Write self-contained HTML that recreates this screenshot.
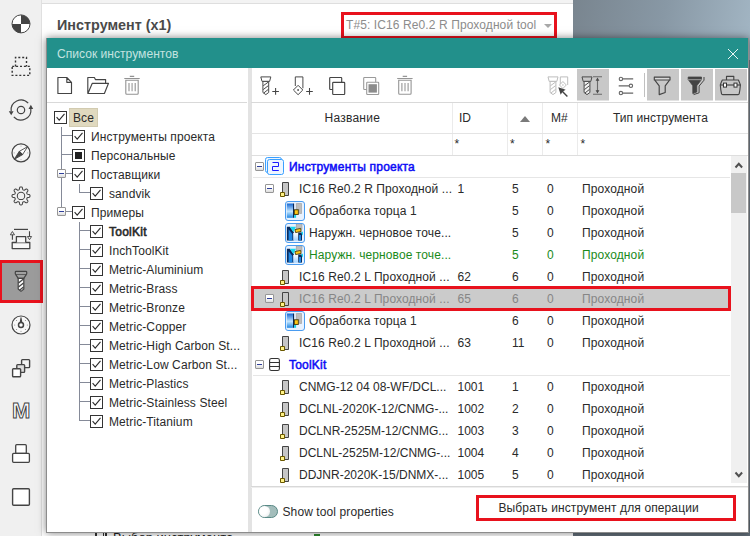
<!DOCTYPE html>
<html lang="ru">
<head>
<meta charset="utf-8">
<title>Список инструментов</title>
<style>
*{box-sizing:border-box;margin:0;padding:0}
html,body{width:750px;height:536px;overflow:hidden}
body{position:relative;font-family:"Liberation Sans",sans-serif;font-size:12px;color:#333;background:#77828e}
#bg{left:573px;top:0;width:177px;height:60px;background:linear-gradient(100deg,#79858f 0%,#8898a5 50%,#a3b6c4 100%)}
#bg2{left:573px;top:520px;width:177px;height:16px;background:#626e79}
.abs{position:absolute}
svg{position:absolute;overflow:visible}
#side{left:0;top:0;width:42px;height:536px;background:#f0f0f0;border-right:1px solid #e0e0e0}
#selbox{left:-1px;top:260px;width:44px;height:43px;background:#9b9b9b;border:3px solid #e8121d}
#panel{left:42px;top:0;width:531px;height:536px;background:#fff}
#panel .topline{left:0;top:0;width:531px;height:4px;background:#f3f3f3;border-bottom:1px solid #dedede}
#ptitle{left:15px;top:16px;font-size:15px;font-weight:bold;color:#4a4a4a;white-space:nowrap;transform-origin:0 0;transform:scaleX(.958)}
#combo{left:299px;top:12px;width:216px;height:27px;border:3px solid #e8121d;font-size:12px;letter-spacing:.1px;color:#8c8c8c;line-height:21px;padding-left:2px;white-space:nowrap}
#combo span{display:inline-block}
#combo i{position:absolute;right:2px;top:9px;border:4px solid transparent;border-top:4px solid #a8a8a8;border-bottom:0}
#dlg{left:46px;top:38px;width:703px;height:495px;background:#fff;border:1px solid #8c8c8c;border-top:0;box-shadow:0 0 8px rgba(0,0,0,.5)}
#dtitle{left:0;top:0;width:701px;height:30px;background:#22908b;color:#c4e3e0;font-size:13px;line-height:32px;padding-left:10px}
#dtitle span{display:inline-block;transform-origin:0 50%;transform:scaleX(.93)}
#lp{left:0;top:30px;width:200px;height:464px;background:#fff}
#split{left:201px;top:30px;width:3px;height:464px;background:#e3e3e3}
#rp{left:204px;top:30px;width:497px;height:464px;background:#fff}
.tbline{left:0;top:34px;height:1px;background:#d9d9d9}
.hl{position:absolute;height:1px;background:#ebebeb}
.vl{position:absolute;width:1px;background:#ebebeb}
.row{position:absolute;left:0;width:480px;height:22px;line-height:22px;white-space:nowrap;color:#2a2a2a}
.row span{position:absolute;top:0}
.row.g{color:#0c0cf6;-webkit-text-stroke:.5px #0c0cf6;letter-spacing:.2px}
.row.gr{color:#1a8a1a}
.row.sel{color:#868686}
.selbx{position:absolute;left:0;width:480px;height:25px;border:3px solid #e8121d;background:#cbcbcb}
.tree div.t{position:absolute;white-space:nowrap;letter-spacing:.1px;height:19px;line-height:19px;color:#2a2a2a}
.cb{position:absolute;width:13px;height:13px;border:1px solid #333;background:#fff}
.ln{position:absolute;background:#858a98}
.ex{position:absolute;width:9px;height:9px;border:1px solid #969696;border-radius:1px;background:linear-gradient(#fff 40%,#dcdcdc)}
.ex:after{content:"";position:absolute;left:1px;top:3px;width:5px;height:1px;background:#2f3f9a}
.tbh{position:absolute;background:#c8c8c8}
</style>
</head>
<body>
<div id="bg" class="abs"></div><div id="bg2" class="abs"></div>
<div id="panel" class="abs"><div class="abs topline"></div><div id="ptitle" class="abs">Инструмент (x1)</div><div id="combo" class="abs"><span>T#5: IC16 Re0.2 R Проходной tool</span><i></i></div></div>
<div class="abs" style="left:95px;top:533px;width:12px;height:4px;border-left:2px solid #333;border-right:2px solid #333"></div><div class="abs" style="left:103px;top:533px;width:1px;height:4px;background:#333"></div><div class="abs" style="left:113px;top:531px;font-size:13px;line-height:14px;color:#222;white-space:nowrap">Выбор инструмента</div><div class="abs" style="left:314px;top:534px;width:6px;height:2px;background:#2e8b2e"></div>
<div id="side" class="abs"></div><div id="selbox" class="abs"></div>
<svg style="left:0;top:0" width="46" height="536" viewBox="0 0 46 536"><circle cx="21" cy="23.9" r="9" fill="#fff" stroke="#444" stroke-width="1"/><path d="M21,23.9V14.9A9,9 0 0 1 30,23.9Z M21,23.9V32.9A9,9 0 0 1 12,23.9Z" fill="#444"/><path d="M15.5,66.4V57.5H26.5V66.4 M12.2,66.4H29.8V75.400H12.2Z" stroke="#333" stroke-width="1.4" fill="none" stroke-dasharray="2 1.9"/><circle cx="21" cy="110" r="3.7" stroke="#444" stroke-width="1.2" fill="none"/><path d="M11.2,111.3A9.9,9.9 0 0 1 28.2,103.100 M30.8,108.7A9.9,9.9 0 0 1 13.8,116.9" stroke="#444" stroke-width="1.2" fill="none"/><path d="M28.500,108.9H33.200L30.850,104.700Z M8.800,111.200H13.600L11.200,115.300Z" fill="#444"/><circle cx="21" cy="152.900" r="9" stroke="#444" stroke-width="1.2" fill="#f7f7f7"/><path d="M27.600,146.700L22.600,154.500L19.400,151.300Z" fill="#fff" stroke="#444" stroke-width=".9" stroke-linejoin="round"/><path d="M14.300,159.300L19.300,151.200L22.700,154.600Z" fill="#444" stroke="#444" stroke-width=".9" stroke-linejoin="round"/><path d="M21,145.600v1 M21,159.200v1 M13.700,152.900h1 M27.300,152.900h1" stroke="#999" stroke-width=".8"/><path d="M30.00,195.90L29.98,196.25L29.92,196.60L29.75,196.94L29.34,197.22L28.55,197.40L27.77,197.52L27.34,197.69L27.14,197.89L27.01,198.12L26.91,198.35L26.82,198.58L26.75,198.83L26.75,199.12L26.93,199.54L27.40,200.18L27.83,200.86L27.92,201.36L27.80,201.71L27.60,202.00L27.36,202.26L27.10,202.50L26.81,202.70L26.46,202.82L25.96,202.73L25.28,202.30L24.64,201.83L24.22,201.65L23.93,201.65L23.68,201.72L23.45,201.81L23.22,201.91L22.99,202.04L22.79,202.24L22.62,202.67L22.50,203.45L22.32,204.24L22.04,204.65L21.70,204.82L21.35,204.88L21.00,204.90L20.65,204.88L20.30,204.82L19.96,204.65L19.68,204.24L19.50,203.45L19.38,202.67L19.21,202.24L19.01,202.04L18.78,201.91L18.55,201.81L18.32,201.72L18.07,201.65L17.78,201.65L17.36,201.83L16.72,202.30L16.04,202.73L15.54,202.82L15.19,202.70L14.90,202.50L14.64,202.26L14.40,202.00L14.20,201.71L14.08,201.36L14.17,200.86L14.60,200.18L15.07,199.54L15.25,199.12L15.25,198.83L15.18,198.58L15.09,198.35L14.99,198.12L14.86,197.89L14.66,197.69L14.23,197.52L13.45,197.40L12.66,197.22L12.25,196.94L12.08,196.60L12.02,196.25L12.00,195.90L12.02,195.55L12.08,195.20L12.25,194.86L12.66,194.58L13.45,194.40L14.23,194.28L14.66,194.11L14.86,193.91L14.99,193.68L15.09,193.45L15.18,193.22L15.25,192.97L15.25,192.68L15.07,192.26L14.60,191.62L14.17,190.94L14.08,190.44L14.20,190.09L14.40,189.80L14.64,189.54L14.90,189.30L15.19,189.10L15.54,188.98L16.04,189.07L16.72,189.50L17.36,189.97L17.78,190.15L18.07,190.15L18.32,190.08L18.55,189.99L18.78,189.89L19.01,189.76L19.21,189.56L19.38,189.13L19.50,188.35L19.68,187.56L19.96,187.15L20.30,186.98L20.65,186.92L21.00,186.90L21.35,186.92L21.70,186.98L22.04,187.15L22.32,187.56L22.50,188.35L22.62,189.13L22.79,189.56L22.99,189.76L23.22,189.89L23.45,189.99L23.68,190.08L23.93,190.15L24.22,190.15L24.64,189.97L25.28,189.50L25.96,189.07L26.46,188.98L26.81,189.10L27.10,189.30L27.36,189.54L27.60,189.80L27.80,190.09L27.92,190.44L27.83,190.94L27.40,191.62L26.93,192.26L26.75,192.68L26.75,192.97L26.82,193.22L26.91,193.45L27.01,193.68L27.14,193.91L27.34,194.11L27.77,194.28L28.55,194.40L29.34,194.58L29.75,194.86L29.92,195.20L29.98,195.55Z" stroke="#444" stroke-width="1.05" fill="none" stroke-linejoin="round"/><circle cx="21" cy="195.900" r="3.7" stroke="#444" stroke-width="1.05" fill="none"/><path d="M14,229.400H28" stroke="#444" stroke-width="1.2" fill="none"/><path d="M12.2,242.500H29.800V248.600H12.200Z" stroke="#444" stroke-width="1.3" fill="#f8f8f8" stroke-linejoin="round"/><path d="M16.400,242.500V236.700H25.700V242.500" stroke="#444" stroke-width="1.3" fill="#f8f8f8" stroke-linejoin="round"/><path d="M12.400,239.700V234.500 M29.500,231.200V236.500" stroke="#444" stroke-width="1.100"/><path d="M10.300,234.800L12.400,231.500L14.500,234.800Z M27.400,236.500L29.500,239.700L31.600,236.500Z" fill="#f0f0f0" stroke="#444" stroke-width=".9" stroke-linejoin="round"/><rect x="15.300" y="271.300" width="11.400" height="3.300" rx=".8" fill="#a0a0a0" stroke="#444" stroke-width="1.200"/><path d="M15.800,274.700L18.200,278.400H23.800L26.200,274.700" fill="#a0a0a0" stroke="#444" stroke-width="1.200" stroke-linejoin="round"/><path d="M18.200,278.400V289L21,291.400L23.800,289V278.400Z" fill="#fff" stroke="#444" stroke-width="1.200" stroke-linejoin="round"/><path d="M18.500,283L23.500,279 M18.500,287L23.500,283 M19.500,290.200L23.500,287" stroke="#444" stroke-width="1.300"/><circle cx="21" cy="325" r="9" stroke="#444" stroke-width="1.200" fill="#f8f8f8"/><path d="M19.400,323.500L20.600,317.300H21.400L22.600,323.500Z" fill="#444"/><circle cx="21" cy="325" r="2.500" stroke="#444" stroke-width="1.500" fill="#fff"/><circle cx="27.30" cy="325.00" r=".55" fill="#888"/><circle cx="25.45" cy="329.45" r=".55" fill="#888"/><circle cx="21.00" cy="331.30" r=".55" fill="#888"/><circle cx="16.55" cy="329.45" r=".55" fill="#888"/><circle cx="14.70" cy="325.00" r=".55" fill="#888"/><circle cx="16.55" cy="320.55" r=".55" fill="#888"/><circle cx="25.45" cy="320.55" r=".55" fill="#888"/><rect x="21.600" y="359.600" width="8" height="8" rx=".8" stroke="#444" stroke-width="1.400" fill="#f4f4f4"/><rect x="16.800" y="364.600" width="7.800" height="7.800" rx=".8" stroke="#444" stroke-width="1.400" fill="#dedede"/><rect x="12.600" y="368.700" width="8" height="8" rx=".8" stroke="#444" stroke-width="1.400" fill="#fff"/><text x="21.100" y="418.200" text-anchor="middle" font-family="Liberation Sans, sans-serif" font-size="22" font-weight="bold" fill="#fff" stroke="#444" stroke-width="1">M</text><rect x="15.700" y="444.700" width="10.600" height="8.700" rx="1" stroke="#444" stroke-width="1.3" fill="#fff"/><rect x="12.600" y="453.400" width="16.800" height="8.900" rx="1" stroke="#444" stroke-width="1.3" fill="#fff"/><rect x="12.600" y="488.700" width="16.800" height="16.600" rx="1" stroke="#444" stroke-width="1.400" fill="#fff"/></svg>
<div id="dlg" class="abs">
<div id="dtitle" class="abs"><span>Список инструментов</span></div>
<svg style="left:681px;top:11px" width="10" height="10" viewBox="0 0 10 10"><path d="M0,0L10,10M10,0L0,10" stroke="#eaf6f5" stroke-width="1"/></svg>
<div id="lp" class="abs"><div class="abs tbline" style="width:200px"></div>
<svg style="left:0;top:0" width="200" height="34" viewBox="47 68 200 34"><path d="M57.900,77.500H66.800L71.500,82.300V93.500H57.900Z M66.800,77.500V82.300H71.500" stroke="#444" stroke-width="1.15" fill="none" stroke-linejoin="round"/><path d="M87.800,93.500V77.500H94.400L95.400,79.600H105.600V83.300 M87.900,93.500L92.300,83.300H108.500L104.400,93.500Z" stroke="#444" stroke-width="1.15" fill="none" stroke-linejoin="round"/><path d="M124.3,78.500H139.7 M129.8,76.400H134.2" stroke="#929292" stroke-width="1.100" fill="none"/><path d="M125.8,80.200H138.2V93.300Q138.2,94.300 137.2,94.300H126.8Q125.8,94.300 125.8,93.300Z" stroke="#929292" stroke-width="1.100" fill="none"/><path d="M129.0,82.900V91.300 M135.2,82.900V91.300" stroke="#929292" stroke-width="1.100"/><path d="M132.1,82.900V91.300" stroke="#b4b4b4" stroke-width="1.500"/></svg>
<div class="tree">
<div class="ln" style="left:14px;top:59px;width:1px;height:85px"></div>
<div class="ln" style="left:14px;top:67px;width:11px;height:1px"></div>
<div class="ln" style="left:14px;top:86px;width:11px;height:1px"></div>
<div class="ln" style="left:14px;top:105px;width:11px;height:1px"></div>
<div class="ln" style="left:14px;top:143px;width:11px;height:1px"></div>
<div class="ln" style="left:32px;top:116px;width:1px;height:9px"></div>
<div class="ln" style="left:32px;top:124px;width:11px;height:1px"></div>
<div class="ln" style="left:32px;top:154px;width:1px;height:199px"></div>
<div class="ln" style="left:32px;top:162px;width:11px;height:1px"></div>
<div class="ln" style="left:32px;top:181px;width:11px;height:1px"></div>
<div class="ln" style="left:32px;top:200px;width:11px;height:1px"></div>
<div class="ln" style="left:32px;top:219px;width:11px;height:1px"></div>
<div class="ln" style="left:32px;top:238px;width:11px;height:1px"></div>
<div class="ln" style="left:32px;top:257px;width:11px;height:1px"></div>
<div class="ln" style="left:32px;top:276px;width:11px;height:1px"></div>
<div class="ln" style="left:32px;top:295px;width:11px;height:1px"></div>
<div class="ln" style="left:32px;top:314px;width:11px;height:1px"></div>
<div class="ln" style="left:32px;top:333px;width:11px;height:1px"></div>
<div class="ln" style="left:32px;top:352px;width:11px;height:1px"></div>
<div class="cb" style="left:7px;top:43px"><svg style="left:0;top:0" width="11" height="11" viewBox="0 0 11 11"><path d="M1.6,5.2L4.2,8.100L9.500,1.900" stroke="#2a2a2a" stroke-width="1.100" fill="none"/></svg></div>
<div class="t" style="left:22px;top:40px;width:29px;height:19px;background:#e0d9bf;border:1px solid #d2cbb0;padding-left:3px;line-height:19px">Все</div>
<div class="cb" style="left:25px;top:62px"><svg style="left:0;top:0" width="11" height="11" viewBox="0 0 11 11"><path d="M1.6,5.2L4.2,8.100L9.500,1.900" stroke="#2a2a2a" stroke-width="1.100" fill="none"/></svg></div>
<div class="t" style="left:44px;top:60px;">Инструменты проекта</div>
<div class="cb" style="left:25px;top:81px"><div class="abs" style="left:2px;top:2px;width:7px;height:7px;background:#222"></div></div>
<div class="t" style="left:44px;top:79px;">Персональные</div>
<div class="cb" style="left:25px;top:100px"><svg style="left:0;top:0" width="11" height="11" viewBox="0 0 11 11"><path d="M1.6,5.2L4.2,8.100L9.500,1.900" stroke="#2a2a2a" stroke-width="1.100" fill="none"/></svg></div>
<div class="t" style="left:44px;top:98px;">Поставщики</div>
<div class="cb" style="left:43px;top:119px"><svg style="left:0;top:0" width="11" height="11" viewBox="0 0 11 11"><path d="M1.6,5.2L4.2,8.100L9.500,1.900" stroke="#2a2a2a" stroke-width="1.100" fill="none"/></svg></div>
<div class="t" style="left:62px;top:117px;">sandvik</div>
<div class="cb" style="left:25px;top:138px"><svg style="left:0;top:0" width="11" height="11" viewBox="0 0 11 11"><path d="M1.6,5.2L4.2,8.100L9.500,1.900" stroke="#2a2a2a" stroke-width="1.100" fill="none"/></svg></div>
<div class="t" style="left:44px;top:136px;">Примеры</div>
<div class="cb" style="left:43px;top:157px"><svg style="left:0;top:0" width="11" height="11" viewBox="0 0 11 11"><path d="M1.6,5.2L4.2,8.100L9.500,1.900" stroke="#2a2a2a" stroke-width="1.100" fill="none"/></svg></div>
<div class="t" style="left:62px;top:155px;-webkit-text-stroke:.6px #2a2a2a;letter-spacing:.25px;">ToolKit</div>
<div class="cb" style="left:43px;top:176px"><svg style="left:0;top:0" width="11" height="11" viewBox="0 0 11 11"><path d="M1.6,5.2L4.2,8.100L9.500,1.900" stroke="#2a2a2a" stroke-width="1.100" fill="none"/></svg></div>
<div class="t" style="left:62px;top:174px;">InchToolKit</div>
<div class="cb" style="left:43px;top:195px"><svg style="left:0;top:0" width="11" height="11" viewBox="0 0 11 11"><path d="M1.6,5.2L4.2,8.100L9.500,1.900" stroke="#2a2a2a" stroke-width="1.100" fill="none"/></svg></div>
<div class="t" style="left:62px;top:193px;">Metric-Aluminium</div>
<div class="cb" style="left:43px;top:214px"><svg style="left:0;top:0" width="11" height="11" viewBox="0 0 11 11"><path d="M1.6,5.2L4.2,8.100L9.500,1.900" stroke="#2a2a2a" stroke-width="1.100" fill="none"/></svg></div>
<div class="t" style="left:62px;top:212px;">Metric-Brass</div>
<div class="cb" style="left:43px;top:233px"><svg style="left:0;top:0" width="11" height="11" viewBox="0 0 11 11"><path d="M1.6,5.2L4.2,8.100L9.500,1.900" stroke="#2a2a2a" stroke-width="1.100" fill="none"/></svg></div>
<div class="t" style="left:62px;top:231px;">Metric-Bronze</div>
<div class="cb" style="left:43px;top:252px"><svg style="left:0;top:0" width="11" height="11" viewBox="0 0 11 11"><path d="M1.6,5.2L4.2,8.100L9.500,1.900" stroke="#2a2a2a" stroke-width="1.100" fill="none"/></svg></div>
<div class="t" style="left:62px;top:250px;">Metric-Copper</div>
<div class="cb" style="left:43px;top:271px"><svg style="left:0;top:0" width="11" height="11" viewBox="0 0 11 11"><path d="M1.6,5.2L4.2,8.100L9.500,1.900" stroke="#2a2a2a" stroke-width="1.100" fill="none"/></svg></div>
<div class="t" style="left:62px;top:269px;">Metric-High Carbon St...</div>
<div class="cb" style="left:43px;top:290px"><svg style="left:0;top:0" width="11" height="11" viewBox="0 0 11 11"><path d="M1.6,5.2L4.2,8.100L9.500,1.900" stroke="#2a2a2a" stroke-width="1.100" fill="none"/></svg></div>
<div class="t" style="left:62px;top:288px;">Metric-Low Carbon St...</div>
<div class="cb" style="left:43px;top:309px"><svg style="left:0;top:0" width="11" height="11" viewBox="0 0 11 11"><path d="M1.6,5.2L4.2,8.100L9.500,1.900" stroke="#2a2a2a" stroke-width="1.100" fill="none"/></svg></div>
<div class="t" style="left:62px;top:307px;">Metric-Plastics</div>
<div class="cb" style="left:43px;top:328px"><svg style="left:0;top:0" width="11" height="11" viewBox="0 0 11 11"><path d="M1.6,5.2L4.2,8.100L9.500,1.900" stroke="#2a2a2a" stroke-width="1.100" fill="none"/></svg></div>
<div class="t" style="left:62px;top:326px;">Metric-Stainless Steel</div>
<div class="cb" style="left:43px;top:347px"><svg style="left:0;top:0" width="11" height="11" viewBox="0 0 11 11"><path d="M1.6,5.2L4.2,8.100L9.500,1.900" stroke="#2a2a2a" stroke-width="1.100" fill="none"/></svg></div>
<div class="t" style="left:62px;top:345px;">Metric-Titanium</div>
<div class="ex" style="left:10px;top:101px"></div>
<div class="ex" style="left:10px;top:139px"></div>
</div>
</div>
<div id="split" class="abs"></div>
<div id="rp" class="abs"><div class="abs" style="left:0;top:0;width:1px;height:464px;background:#e3e3e3"></div><div class="abs tbline" style="width:497px"></div>
<div class="tbh" style="left:325.5px;top:1px;width:32.0px;height:31px"></div><div class="tbh" style="left:325.5px;top:32px;width:32.0px;height:1px;background:#e2e2e2"></div>
<div class="tbh" style="left:395.5px;top:1px;width:32.0px;height:31px"></div><div class="tbh" style="left:395.5px;top:32px;width:32.0px;height:1px;background:#e2e2e2"></div>
<div class="tbh" style="left:429.5px;top:1px;width:32.0px;height:31px"></div><div class="tbh" style="left:429.5px;top:32px;width:32.0px;height:1px;background:#e2e2e2"></div>
<div class="tbh" style="left:463.5px;top:1px;width:32.5px;height:31px"></div><div class="tbh" style="left:463.5px;top:32px;width:32.5px;height:1px;background:#e2e2e2"></div>
<div class="abs" style="left:393px;top:5px;width:1px;height:24px;background:#c0c0c0"></div>
<svg style="left:0;top:0" width="496" height="34" viewBox="251 68 496 34"><path d="M260.8,76.900H270.8L269.6,81.400H262.0Z" fill="#fff" stroke="#4a4a4a" stroke-width="1" stroke-linejoin="round"/><path d="M262.90000000000003,81.400V92.500L265.8,94.600L268.7,92.500V81.400Z" fill="#fff" stroke="#4a4a4a" stroke-width="1" stroke-linejoin="round"/><path d="M263.2,85.800L268.40000000000003,82 M263.2,89.600L268.40000000000003,85.600 M263.8,93L268.40000000000003,89.300" stroke="#4a4a4a" stroke-width="1"/><path d="M272.3,91.4H278.90000000000003 M275.6,88.10000000000001V94.7" stroke="#444" stroke-width="1.050"/><path d="M295.3,86V76.900H302.90000000000003V88.300" fill="none" stroke="#4a4a4a" stroke-width="1" stroke-linejoin="round"/><path d="M298.1,85.300L302.8,90L298.1,94.700L293.40000000000003,90Z" fill="#fff" stroke="#4a4a4a" stroke-width="1" stroke-linejoin="round"/><circle cx="298.1" cy="90" r=".9" fill="#4a4a4a"/><path d="M306.2,91.4H312.8 M309.5,88.10000000000001V94.7" stroke="#444" stroke-width="1.050"/><rect x="329.700" y="77.500" width="12" height="12" rx=".7" fill="#fff" stroke="#444" stroke-width="1.15"  stroke-linejoin="round"/><rect x="332.700" y="82.300" width="12" height="12.200" rx=".7" fill="#fff" stroke="#444" stroke-width="1.15"  stroke-linejoin="round"/><rect x="363.700" y="77.500" width="12" height="12" rx=".7" fill="#fff" stroke="#9a9a9a" stroke-width="1.100"/><rect x="366.700" y="82.300" width="12" height="12.200" rx=".7" fill="#fff" stroke="#9a9a9a" stroke-width="1.100"/><rect x="368.500" y="84.200" width="8.400" height="8.400" fill="#8c8c8c"/><path d="M397.2,78.500H412.59999999999997 M402.7,76.400H407.09999999999997" stroke="#969696" stroke-width="1.100" fill="none"/><path d="M398.7,80.200H411.09999999999997V93.300Q411.09999999999997,94.300 410.09999999999997,94.300H399.7Q398.7,94.300 398.7,93.300Z" stroke="#969696" stroke-width="1.100" fill="none"/><path d="M401.9,82.900V91.300 M408.09999999999997,82.900V91.300" stroke="#969696" stroke-width="1.100"/><path d="M405.0,82.900V91.300" stroke="#b4b4b4" stroke-width="1.500"/><path d="M548,76.900H558L556.8,81.400H549.2Z" fill="#fff" stroke="#bdbdbd" stroke-width="1" stroke-linejoin="round"/><path d="M550.1,81.400V92.500L553,94.600L555.9,92.500V81.400Z" fill="#fff" stroke="#bdbdbd" stroke-width="1" stroke-linejoin="round"/><path d="M550.4,85.800L555.6,82 M550.4,89.600L555.6,85.600 M551,93L555.6,89.300" stroke="#bdbdbd" stroke-width="1"/><path d="M560.300,84V76.900H567.700V85" fill="none" stroke="#bdbdbd" stroke-width="1"/><path d="M562.900,81.500L566.300,85L562.900,88.500L559.500,85Z" fill="#fff" stroke="#bdbdbd" stroke-width="1"/><circle cx="562.900" cy="85" r=".8" fill="#bdbdbd"/><path d="M558.300,87.200L565.700,89.800L563.200,91.300L567.900,96L566.900,97L562.200,92.300L560.700,94.800Z" fill="#444"/><path d="M582,76.900H592L590.8,81.400H583.2Z" fill="#c8c8c8" stroke="#4a4a4a" stroke-width="1" stroke-linejoin="round"/><path d="M584.1,81.400V92.500L587,94.600L589.9,92.500V81.400Z" fill="#f2f2f2" stroke="#4a4a4a" stroke-width="1" stroke-linejoin="round"/><path d="M584.4,85.800L589.6,82 M584.4,89.600L589.6,85.600 M585,93L589.6,89.300" stroke="#4a4a4a" stroke-width="1"/><path d="M593,76.700H602 M593,94.300H602 M597.500,79V92" stroke="#6a6a6a" stroke-width="1.100"/><path d="M597.500,77.400L599.400,80.800H595.600Z M597.500,93.600L599.400,90.200H595.600Z" fill="#4a4a4a"/><path d="M622.800,78.900H633.200 M618.700,85.800H629 M622.800,93.100H633.200" stroke="#666" stroke-width="1.200" fill="none"/><circle cx="620.900" cy="78.900" r="1.700" stroke="#666" stroke-width="1.100" fill="none"/><circle cx="630.900" cy="85.800" r="1.700" stroke="#666" stroke-width="1.100" fill="none"/><circle cx="620.900" cy="93.100" r="1.700" stroke="#666" stroke-width="1.100" fill="none"/><path d="M654.300,77.100H670V80H654.300Z" fill="#d8d8d8" stroke="#444" stroke-width="1.15"  stroke-linejoin="round"/><path d="M654.800,80.100L659.200,85.900V94.600L665.200,92.500V85.900L669.500,80.100" stroke="#444" stroke-width="1.15" fill="none" stroke-linejoin="round"/><path d="M688.200,77H701.500V79.600L696.800,85.700V92L692.800,93.600V85.700L688.200,79.600Z" fill="#444" stroke="#444" stroke-width=".8" stroke-linejoin="round"/><path d="M688.200,79.700H701.500" stroke="#c6c6c6" stroke-width=".7"/><path d="M704,77V80.200L699.100,86.100V92.800L693.600,94.600" stroke="#444" stroke-width="1" fill="none" stroke-linejoin="round"/><path d="M726.500,80V76.400H733.800V80" stroke="#444" stroke-width="1.15" fill="none" stroke-linejoin="round"/><path d="M722.300,80H738.400Q739.600,82.500 740.400,85Q740,90 739.200,93.600Q739,94.600 738,94.600H722.700Q721.700,94.600 721.500,93.600Q720.700,90 720.300,85Q721.100,82.500 722.300,80Z" stroke="#444" stroke-width="1.15" fill="none" stroke-linejoin="round"/><path d="M720.300,85H740.400" stroke="#444" stroke-width="1.15" fill="none" stroke-linejoin="round"/><rect x="723.500" y="83.100" width="3" height="4" fill="#fff" stroke="#333" stroke-width="1"/><rect x="734" y="83.100" width="3" height="4" fill="#fff" stroke="#333" stroke-width="1"/></svg>
<div class="vl" style="left:201px;top:35px;height:52px"></div>
<div class="vl" style="left:256px;top:35px;height:52px"></div>
<div class="vl" style="left:291px;top:35px;height:52px"></div>
<div class="vl" style="left:326px;top:35px;height:52px"></div>
<div class="hl" style="left:0px;top:65px;width:497px;background:#e4e4e4"></div>
<div class="hl" style="left:0px;top:87px;width:497px;background:#dedede"></div>
<div class="abs" style="left:73.5px;top:40px;height:20px;line-height:20px;white-space:nowrap;color:#2a2a2a;letter-spacing:.25px">Название</div>
<div class="abs" style="left:208px;top:40px;height:20px;line-height:20px;white-space:nowrap;color:#2a2a2a;">ID</div>
<div class="abs" style="left:300px;top:40px;height:20px;line-height:20px;white-space:nowrap;color:#2a2a2a;">M#</div>
<div class="abs" style="left:362px;top:40px;height:20px;line-height:20px;white-space:nowrap;color:#2a2a2a;letter-spacing:.05px">Тип инструмента</div>
<div class="abs" style="left:269px;top:48px;border:5px solid transparent;border-bottom:6px solid #7a7a7a;border-top:0"></div>
<div class="abs" style="left:203.5px;top:66px;height:20px;line-height:20px;white-space:nowrap;color:#2a2a2a;">*</div>
<div class="abs" style="left:259px;top:66px;height:20px;line-height:20px;white-space:nowrap;color:#2a2a2a;">*</div>
<div class="abs" style="left:294.5px;top:66px;height:20px;line-height:20px;white-space:nowrap;color:#2a2a2a;">*</div>
<div class="abs" style="left:329.5px;top:66px;height:20px;line-height:20px;white-space:nowrap;color:#2a2a2a;">*</div>
<svg width="0" height="0" style="left:0;top:0"><defs><linearGradient id="g1" x1="0" y1="0" x2="0" y2="1"><stop offset="0" stop-color="#1668d2"/><stop offset=".55" stop-color="#c4e6ff"/><stop offset="1" stop-color="#2288e2"/></linearGradient><linearGradient id="g2" x1="0" y1="0" x2="0" y2="1"><stop offset="0" stop-color="#fff"/><stop offset="1" stop-color="#9fd0ff"/></linearGradient></defs></svg>
<div class="row g" style="top:88px"><span style="left:38px">Инструменты проекта</span><span class="c" style="left:206.5px"></span><span style="left:261px"></span><span style="left:296px"></span><span style="left:331px;letter-spacing:.12px"></span></div>
<div class="ex" style="left:4px;top:94px"></div>
<div class="hl" style="left:2px;top:109px;width:477px;background:#e6e6e6"></div>
<svg style="left:14px;top:89px" width="20" height="19" viewBox="0 0 20 19"><rect x=".5" y=".5" width="16" height="15" rx="2" fill="#eef6ff" stroke="#3aa0ff" stroke-width="1"/><rect x="2.500" y="2.500" width="16" height="15" rx="2" fill="#eef6ff" stroke="#3aa0ff" stroke-width="1"/><path d="M7.500,5.500H13.500V9.500H7.500V13.500H13.800" stroke="#1a1aff" stroke-width="1" fill="none"/></svg>
<div class="row" style="top:110px"><span style="left:48px;letter-spacing:.1px">IC16 Re0.2 R Проходной ...</span><span class="c" style="left:206.5px">1</span><span style="left:261px">5</span><span style="left:296px">0</span><span style="left:331px;letter-spacing:.12px">Проходной</span></div>
<div class="ex" style="left:14px;top:116px"></div>
<svg style="left:29px;top:113px" width="10" height="17" viewBox="0 0 10 17"><path d="M2.500,1.500H8.500V14.500H2.500Z" fill="#c6c6c6" stroke="#444" stroke-width="1"/><path d="M.5,11.500H4.500V15.500H.5Z" fill="#fff287" stroke="#6b5800" stroke-width="1"/></svg>
<div class="row" style="top:132px"><span style="left:58px;letter-spacing:.1px">Обработка торца 1</span><span class="c" style="left:206.5px"></span><span style="left:261px">5</span><span style="left:296px">0</span><span style="left:331px;letter-spacing:.12px">Проходной</span></div>
<svg style="left:34px;top:133px" width="20" height="20" viewBox="0 0 20 20"><rect x=".5" y=".5" width="19" height="19" rx="2.500" fill="#e8f2ff" stroke="#4a9cf0" stroke-width="1"/><rect x="1.800" y="2.500" width="6.400" height="14.300" fill="url(#g1)"/><rect x="8" y="2.500" width="1.100" height="14.300" fill="#0a2a5a"/><rect x="9.100" y="14" width="2" height="2.800" fill="#19d0e8"/><path d="M11.300,2.500H16.500V12.500H14.500V8.700H11.300Z" fill="#bdbdbd" stroke="#9a9a9a" stroke-width=".6"/><rect x="9.300" y="8.800" width="4" height="4.600" fill="#ffc814" stroke="#3a3000" stroke-width=".9"/></svg>
<div class="row" style="top:154px"><span style="left:58px;letter-spacing:.1px">Наружн. черновое точе...</span><span class="c" style="left:206.5px"></span><span style="left:261px">5</span><span style="left:296px">0</span><span style="left:331px;letter-spacing:.12px">Проходной</span></div>
<svg style="left:34px;top:155px" width="20" height="20" viewBox="0 0 20 20"><rect x=".5" y=".5" width="19" height="19" rx="2.500" fill="#e8f2ff" stroke="#4a9cf0" stroke-width="1"/><path d="M1.900,3.800H4.800L9,9.500V17.600H1.900Z" fill="#0a2a5a"/><path d="M3.600,6.200L7.400,11V17.600H3.600Z" fill="#1e88e5"/><path d="M4.800,3.800H11L8.500,9.200Z" fill="#19d8f0"/><rect x="8.200" y="10" width="5" height="7.600" fill="url(#g2)"/><path d="M13.200,9.500H17V17.600H13.200Z" fill="#0a2a5a"/><path d="M14,12H16V17.600H14Z" fill="#1e88e5"/><path d="M16.600,8.800H18V12.500L16.600,11Z" fill="#19d8f0"/><rect x="11.200" y="1.600" width="5.800" height="4.600" fill="#bdbdbd" stroke="#9a9a9a" stroke-width=".6"/><path d="M10,6.600L15.600,5.400L16.200,8.400L10.600,9.600Z" fill="#ffc814" stroke="#3a3000" stroke-width=".8"/></svg>
<div class="row gr" style="top:176px"><span style="left:58px;letter-spacing:.1px">Наружн. черновое точе...</span><span class="c" style="left:206.5px"></span><span style="left:261px">5</span><span style="left:296px">0</span><span style="left:331px;letter-spacing:.12px">Проходной</span></div>
<svg style="left:34px;top:177px" width="20" height="20" viewBox="0 0 20 20"><rect x=".5" y=".5" width="19" height="19" rx="2.500" fill="#e8f2ff" stroke="#4a9cf0" stroke-width="1"/><path d="M1.900,3.800H4.800L9,9.500V17.600H1.900Z" fill="#0a2a5a"/><path d="M3.600,6.200L7.400,11V17.600H3.600Z" fill="#1e88e5"/><path d="M4.800,3.800H11L8.500,9.200Z" fill="#19d8f0"/><rect x="8.200" y="10" width="5" height="7.600" fill="url(#g2)"/><path d="M13.200,9.500H17V17.600H13.200Z" fill="#0a2a5a"/><path d="M14,12H16V17.600H14Z" fill="#1e88e5"/><path d="M16.600,8.800H18V12.500L16.600,11Z" fill="#19d8f0"/><rect x="11.200" y="1.600" width="5.800" height="4.600" fill="#bdbdbd" stroke="#9a9a9a" stroke-width=".6"/><path d="M10,6.600L15.600,5.400L16.200,8.400L10.600,9.600Z" fill="#ffc814" stroke="#3a3000" stroke-width=".8"/></svg>
<div class="row" style="top:198px"><span style="left:48px;letter-spacing:.1px">IC16 Re0.2 L Проходной ...</span><span class="c" style="left:206.5px">62</span><span style="left:261px">6</span><span style="left:296px">0</span><span style="left:331px;letter-spacing:.12px">Проходной</span></div>
<svg style="left:29px;top:201px" width="10" height="17" viewBox="0 0 10 17"><path d="M2.500,1.500H8.500V14.500H2.500Z" fill="#c6c6c6" stroke="#444" stroke-width="1"/><path d="M.5,11.500H4.500V15.500H.5Z" fill="#fff287" stroke="#6b5800" stroke-width="1"/></svg>
<div class="selbx" style="top:218px"></div>
<div class="row sel" style="top:220px"><span style="left:48px;letter-spacing:.1px">IC16 Re0.2 L Проходной ...</span><span class="c" style="left:206.5px">65</span><span style="left:261px">6</span><span style="left:296px">0</span><span style="left:331px;letter-spacing:.12px">Проходной</span></div>
<div class="ex" style="left:14px;top:226px"></div>
<svg style="left:29px;top:223px" width="10" height="17" viewBox="0 0 10 17"><path d="M2.500,1.500H8.500V14.500H2.500Z" fill="#c6c6c6" stroke="#444" stroke-width="1"/><path d="M.5,11.500H4.500V15.500H.5Z" fill="#fff287" stroke="#6b5800" stroke-width="1"/></svg>
<div class="row" style="top:242px"><span style="left:58px;letter-spacing:.1px">Обработка торца 1</span><span class="c" style="left:206.5px"></span><span style="left:261px">6</span><span style="left:296px">0</span><span style="left:331px;letter-spacing:.12px">Проходной</span></div>
<svg style="left:34px;top:243px" width="20" height="20" viewBox="0 0 20 20"><rect x=".5" y=".5" width="19" height="19" rx="2.500" fill="#e8f2ff" stroke="#4a9cf0" stroke-width="1"/><rect x="1.800" y="2.500" width="6.400" height="14.300" fill="url(#g1)"/><rect x="8" y="2.500" width="1.100" height="14.300" fill="#0a2a5a"/><rect x="9.100" y="14" width="2" height="2.800" fill="#19d0e8"/><path d="M11.300,2.500H16.500V12.500H14.500V8.700H11.300Z" fill="#bdbdbd" stroke="#9a9a9a" stroke-width=".6"/><rect x="9.300" y="8.800" width="4" height="4.600" fill="#ffc814" stroke="#3a3000" stroke-width=".9"/></svg>
<div class="row" style="top:264px"><span style="left:48px;letter-spacing:.1px">IC16 Re0.2 L Проходной ...</span><span class="c" style="left:206.5px">63</span><span style="left:261px">11</span><span style="left:296px">0</span><span style="left:331px;letter-spacing:.12px">Проходной</span></div>
<svg style="left:29px;top:267px" width="10" height="17" viewBox="0 0 10 17"><path d="M2.500,1.500H8.500V14.500H2.500Z" fill="#c6c6c6" stroke="#444" stroke-width="1"/><path d="M.5,11.500H4.500V15.500H.5Z" fill="#fff287" stroke="#6b5800" stroke-width="1"/></svg>
<div class="row g" style="top:286px"><span style="left:38px">ToolKit</span><span class="c" style="left:206.5px"></span><span style="left:261px"></span><span style="left:296px"></span><span style="left:331px;letter-spacing:.12px"></span></div>
<div class="ex" style="left:4px;top:292px"></div>
<div class="hl" style="left:2px;top:307px;width:477px;background:#e6e6e6"></div>
<svg style="left:18px;top:290px" width="11" height="14" viewBox="0 0 11 14"><rect x=".6" y=".5" width="9.800" height="12" rx="1.800" fill="#fff" stroke="#333" stroke-width="1.100"/><path d="M.6,4.500H10.400 M.6,8.500H10.400" stroke="#333" stroke-width="1"/></svg>
<div class="row" style="top:308px"><span style="left:48px">CNMG-12 04 08-WF/DCL...</span><span class="c" style="left:206.5px">1001</span><span style="left:261px">1</span><span style="left:296px">0</span><span style="left:331px;letter-spacing:.12px">Проходной</span></div>
<svg style="left:29px;top:311px" width="10" height="17" viewBox="0 0 10 17"><path d="M2.500,1.500H8.500V14.500H2.500Z" fill="#c6c6c6" stroke="#444" stroke-width="1"/><path d="M.5,11.500H4.500V15.500H.5Z" fill="#fff287" stroke="#6b5800" stroke-width="1"/></svg>
<div class="row" style="top:330px"><span style="left:48px">DCLNL-2020K-12/CNMG-...</span><span class="c" style="left:206.5px">1002</span><span style="left:261px">2</span><span style="left:296px">0</span><span style="left:331px;letter-spacing:.12px">Проходной</span></div>
<svg style="left:29px;top:333px" width="10" height="17" viewBox="0 0 10 17"><path d="M2.500,1.500H8.500V14.500H2.500Z" fill="#c6c6c6" stroke="#444" stroke-width="1"/><path d="M.5,11.500H4.500V15.500H.5Z" fill="#fff287" stroke="#6b5800" stroke-width="1"/></svg>
<div class="row" style="top:352px"><span style="left:48px">DCLNR-2525M-12/CNMG...</span><span class="c" style="left:206.5px">1003</span><span style="left:261px">3</span><span style="left:296px">0</span><span style="left:331px;letter-spacing:.12px">Проходной</span></div>
<svg style="left:29px;top:355px" width="10" height="17" viewBox="0 0 10 17"><path d="M2.500,1.500H8.500V14.500H2.500Z" fill="#c6c6c6" stroke="#444" stroke-width="1"/><path d="M.5,11.500H4.500V15.500H.5Z" fill="#fff287" stroke="#6b5800" stroke-width="1"/></svg>
<div class="row" style="top:374px"><span style="left:48px">DCLNL-2525M-12/CNMG-...</span><span class="c" style="left:206.5px">1004</span><span style="left:261px">4</span><span style="left:296px">0</span><span style="left:331px;letter-spacing:.12px">Проходной</span></div>
<svg style="left:29px;top:377px" width="10" height="17" viewBox="0 0 10 17"><path d="M2.500,1.500H8.500V14.500H2.500Z" fill="#c6c6c6" stroke="#444" stroke-width="1"/><path d="M.5,11.500H4.500V15.500H.5Z" fill="#fff287" stroke="#6b5800" stroke-width="1"/></svg>
<div class="row" style="top:396px"><span style="left:48px">DDJNR-2020K-15/DNMX-...</span><span class="c" style="left:206.5px">1005</span><span style="left:261px">5</span><span style="left:296px">0</span><span style="left:331px;letter-spacing:.12px">Проходной</span></div>
<svg style="left:29px;top:399px" width="10" height="17" viewBox="0 0 10 17"><path d="M2.500,1.500H8.500V14.500H2.500Z" fill="#c6c6c6" stroke="#444" stroke-width="1"/><path d="M.5,11.500H4.500V15.500H.5Z" fill="#fff287" stroke="#6b5800" stroke-width="1"/></svg>
<div class="abs" style="left:480px;top:88px;width:16px;height:327px;background:#f0f0f0"></div>
<div class="abs" style="left:480px;top:105px;width:15px;height:40px;background:#c8c8c8"></div>
<svg style="left:483px;top:93px" width="10" height="8" viewBox="0 0 10 8"><path d="M1.500,6.500L4.800,2.800L8.100,6.500" stroke="#505050" stroke-width="2" fill="none"/></svg>
<svg style="left:483px;top:403px" width="10" height="8" viewBox="0 0 10 8"><path d="M1.500,1.500L4.800,5.200L8.100,1.500" stroke="#505050" stroke-width="2" fill="none"/></svg>
<div class="hl" style="left:0px;top:418px;width:497px;background:#d8d8d8"></div>
<div class="hl" style="left:0px;top:419px;width:497px;background:#eeeeee"></div>
<div class="abs" style="left:7px;top:437px;width:20px;height:13px;border-radius:6.5px;background:#a3bdbb;border:1px solid #5a8a87"></div>
<div class="abs" style="left:8px;top:438px;width:11px;height:11px;border-radius:5.5px;background:radial-gradient(circle at 40% 40%,#fff 40%,#e4e8e8)"></div>
<div class="abs" style="left:31.5px;top:433.5px;height:20px;line-height:20px;white-space:nowrap;color:#2a2a2a;letter-spacing:.1px">Show tool properties</div>
<div class="abs" style="left:225px;top:427px;width:260px;height:26px;border:3px solid #e8121d;padding-left:19.500px;line-height:20px;color:#2a2a2a;white-space:nowrap;letter-spacing:.12px">Выбрать инструмент для операции</div>
</div>
</div>
</body>
</html>
